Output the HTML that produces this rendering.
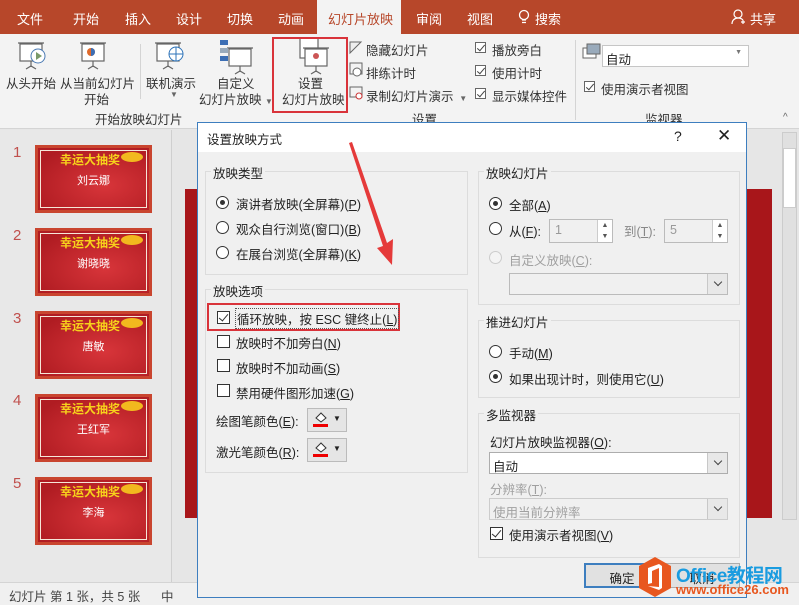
<!DOCTYPE html>
<html><head><meta charset="utf-8"><style>
*{margin:0;padding:0;box-sizing:border-box}
body{width:799px;height:605px;overflow:hidden;position:relative;background:#e6e6e6;font-family:"Liberation Sans","Noto Sans CJK SC",sans-serif;font-size:12px;color:#222}
.a{position:absolute;white-space:nowrap}
.tab{position:absolute;top:9px;color:#fff;font-size:13px}
.rb{font-size:12.5px;color:#333}
.thumb{position:absolute;left:35px;width:117px;height:68px;border:3px solid #c9452f;background:radial-gradient(ellipse at 60% 60%,#d8353a,#b01c22 80%)}
.thumb:after{content:"";position:absolute;left:2px;top:2px;right:2px;bottom:2px;border:1px solid #f6e6d8}
.thumb .t1{position:absolute;left:22px;top:3px;color:#f7d21b;font-weight:bold;font-size:12px}
.thumb .t2{position:absolute;left:0;right:0;top:24px;text-align:center;color:#fff;font-size:11px}
.gold{position:absolute;right:6px;top:4px;width:22px;height:10px;background:#f2b81e;border-radius:50%}
.num{position:absolute;left:13px;color:#c0504d;font-size:15px}
.frame{position:absolute;border:1px solid #dcdcdc}
.lbl{position:absolute;background:#f0f0f0;padding:0 2px;font-size:12.5px}
.rad{position:absolute;width:13px;height:13px;border:1px solid #333;border-radius:50%;background:#fff}
.rad.on:after{content:"";position:absolute;left:3px;top:3px;width:5px;height:5px;border-radius:50%;background:#333}
.chk{position:absolute;width:13px;height:13px;border:1px solid #333;background:#fff}
.chk.on:after{content:"";position:absolute;left:3px;top:0px;width:4px;height:8px;border:solid #333;border-width:0 1.5px 1.5px 0;transform:rotate(40deg)}
.t{position:absolute;font-size:12.5px;white-space:nowrap}
.dis{color:#a0a0a0}
.combo{position:absolute;border:1px solid #adadad;background:#fff}
.combo .btn{position:absolute;right:0;top:0;bottom:0;width:20px;border-left:1px solid #c8c8c8;background:#e8e8e8}
.combo .btn:after{content:"";position:absolute;left:7px;top:5px;width:5px;height:5px;border:solid #444;border-width:0 1px 1px 0;transform:rotate(45deg)}
.rck{position:absolute;width:11px;height:11px;border:1px solid #666;background:#fff}
.rck:after{content:"";position:absolute;left:3px;top:0;width:3px;height:7px;border:solid #444;border-width:0 1px 1px 0;transform:rotate(40deg)}
</style></head><body>
<!-- tab bar -->
<div class="a" style="left:0;top:0;width:799px;height:34px;background:#b7472a"></div>
<div class="tab" style="left:17px">文件</div>
<div class="tab" style="left:73px">开始</div>
<div class="tab" style="left:125px">插入</div>
<div class="tab" style="left:176px">设计</div>
<div class="tab" style="left:227px">切换</div>
<div class="tab" style="left:278px">动画</div>
<div class="a" style="left:317px;top:0;width:84px;height:35px;background:#f3f3f3"></div>
<div class="tab" style="left:328px;color:#b7472a">幻灯片放映</div>
<div class="tab" style="left:416px">审阅</div>
<div class="tab" style="left:467px">视图</div>
<svg class="a" style="left:518px;top:9px" width="12" height="17"><circle cx="6" cy="6" r="4.5" fill="none" stroke="#fff" stroke-width="1.3"/><path d="M4 11h4M4 13.5h4" stroke="#fff" stroke-width="1.3"/></svg>
<div class="tab" style="left:535px">搜索</div>
<svg class="a" style="left:731px;top:9px" width="16" height="16"><circle cx="7" cy="5" r="4" fill="none" stroke="#fff" stroke-width="1.2"/><path d="M1 15c0-4 3-6 6-6s4 1 5 2M12 11v4M10 13h4" fill="none" stroke="#fff" stroke-width="1.2"/></svg>
<div class="tab" style="left:750px">共享</div>
<!-- ribbon -->
<div class="a" style="left:0;top:34px;width:799px;height:95px;background:#f3f3f3;border-bottom:1px solid #d4d4d4"></div>
<svg class="a" style="left:0;top:36px" width="799" height="60">
<g fill="none" stroke="#666" stroke-width="1.2">
<rect x="20" y="8" width="22" height="17" fill="#fff"/><path d="M18 7h26M31 25v6M26 33l5-3 5 3"/>
<rect x="82" y="8" width="22" height="17" fill="#fff"/><path d="M80 7h26M93 25v6M88 33l5-3 5 3"/>
<rect x="157" y="8" width="22" height="17" fill="#fff"/><path d="M155 7h26M168 25v6M163 33l5-3 5 3"/>
<rect x="229" y="13" width="22" height="17" fill="#fff"/><path d="M227 12h26M240 30v6M235 38l5-3 5 3"/>
<rect x="300" y="2" width="18" height="20" fill="#fff"/>
<rect x="305" y="13" width="22" height="17" fill="#fff"/><path d="M303 12h26M316 30v6M311 38l5-3 5 3"/>
</g>
<circle cx="38" cy="20" r="7" fill="#fff" stroke="#4a7ab3"/><path d="M36 16v8l6-4z" fill="#7a9a6a"/>
<circle cx="91" cy="16" r="4" fill="#e06a2b"/><path d="M91 12a4 4 0 0 1 0 8z" fill="#3c6eb4"/>
<circle cx="176" cy="18" r="7" fill="#fff" stroke="#2e73b8"/><path d="M169 18h14M176 11v14" stroke="#2e73b8"/>
<rect x="220" y="4" width="8" height="5" fill="#3c6eb4"/><rect x="220" y="12" width="8" height="5" fill="#9ab"/><rect x="220" y="20" width="8" height="5" fill="#3c6eb4"/>
<circle cx="316" cy="20" r="3" fill="#c55"/>
<rect x="583" y="12" width="13" height="10" fill="#fff" stroke="#666"/><rect x="587" y="8" width="13" height="10" fill="#9ab" stroke="#666"/>
</svg>
<div class="a rb" style="left:6px;top:73px">从头开始</div>
<div class="a rb" style="left:60px;top:73px">从当前幻灯片</div>
<div class="a rb" style="left:84px;top:89px">开始</div>
<div class="a" style="left:140px;top:44px;width:1px;height:55px;background:#d4d4d4"></div>
<div class="a rb" style="left:146px;top:73px">联机演示</div>
<div class="a" style="left:170px;top:90px;font-size:8px;color:#666">▼</div>
<div class="a rb" style="left:217px;top:73px">自定义</div>
<div class="a rb" style="left:199px;top:89px">幻灯片放映 <span style="font-size:8px;color:#666">▼</span></div>
<div class="a" style="left:272px;top:37px;width:76px;height:76px;border:2.5px solid #d9333a"></div>
<div class="a rb" style="left:298px;top:73px">设置</div>
<div class="a rb" style="left:282px;top:89px">幻灯片放映</div>
<div class="a rb" style="left:95px;top:109px">开始放映幻灯片</div>
<svg class="a" style="left:348px;top:40px" width="16" height="60" fill="none" stroke="#666"><path d="M2 13L13 2H2z" fill="#eee"/><rect x="2" y="23" width="12" height="11"/><circle cx="9" cy="32" r="4" fill="#fff"/><rect x="2" y="47" width="12" height="10"/><circle cx="11" cy="56" r="3" fill="#fff" stroke="#c33"/></svg>
<div class="a rb" style="left:366px;top:40px">隐藏幻灯片</div>
<div class="a rb" style="left:366px;top:63px">排练计时</div>
<div class="a rb" style="left:366px;top:86px">录制幻灯片演示 <span style="font-size:8px;color:#666">&nbsp;▼</span></div>
<div class="rck" style="left:475px;top:42px"></div><div class="a rb" style="left:492px;top:40px">播放旁白</div>
<div class="rck" style="left:475px;top:65px"></div><div class="a rb" style="left:492px;top:63px">使用计时</div>
<div class="rck" style="left:475px;top:88px"></div><div class="a rb" style="left:492px;top:86px">显示媒体控件</div>
<div class="a rb" style="left:412px;top:109px">设置</div>
<div class="a" style="left:575px;top:40px;width:1px;height:80px;background:#d4d4d4"></div>
<div class="a" style="left:602px;top:45px;width:147px;height:22px;border:1px solid #c6c6c6;background:#fff;font-size:12.5px;padding:3px 3px">自动<span style="position:absolute;right:6px;top:3px;font-size:7px;color:#777">▼</span></div>
<div class="rck" style="left:584px;top:81px"></div><div class="a rb" style="left:601px;top:79px">使用演示者视图</div>
<div class="a rb" style="left:645px;top:109px">监视器</div>
<div class="a" style="left:783px;top:112px;font-size:10px;color:#666">^</div>
<!-- left panel -->
<div class="a" style="left:0;top:130px;width:172px;height:452px;background:#e8e8e8;border-right:1px solid #cfcfcf"></div>
<div class="num" style="top:144px">1</div><div class="num" style="top:227px">2</div><div class="num" style="top:310px">3</div><div class="num" style="top:392px">4</div><div class="num" style="top:475px">5</div>
<div class="thumb" style="top:145px"><div class="t1">幸运大抽奖</div><div class="gold"></div><div class="t2">刘云娜</div></div>
<div class="thumb" style="top:228px"><div class="t1">幸运大抽奖</div><div class="gold"></div><div class="t2">谢晓晓</div></div>
<div class="thumb" style="top:311px"><div class="t1">幸运大抽奖</div><div class="gold"></div><div class="t2">唐敏</div></div>
<div class="thumb" style="top:394px"><div class="t1">幸运大抽奖</div><div class="gold"></div><div class="t2">王红军</div></div>
<div class="thumb" style="top:477px"><div class="t1">幸运大抽奖</div><div class="gold"></div><div class="t2">李海</div></div>
<!-- main slide -->
<div class="a" style="left:185px;top:189px;width:587px;height:329px;background:#a8161a"></div>
<div class="a" style="left:782px;top:132px;width:15px;height:388px;background:#e0e0e0;border:1px solid #ccc"></div>
<div class="a" style="left:783px;top:148px;width:13px;height:60px;background:#fff;border:1px solid #ccc"></div>
<div class="a" style="left:0;top:582px;width:799px;height:23px;background:#f0f0f0;border-top:1px solid #d4d4d4"></div>
<div class="a" style="left:9px;top:586px;font-size:12.5px;color:#444">幻灯片 第 1 张，共 5 张</div>
<div class="a" style="left:161px;top:586px;font-size:12.5px;color:#444">中</div>
<!-- dialog -->
<div class="a" style="left:197px;top:122px;width:550px;height:476px;background:#f0f0f0;border:1px solid #3d7ebf"></div>
<div class="a" style="left:198px;top:123px;width:548px;height:29px;background:#fff"></div>
<div class="t" style="left:207px;top:129px">设置放映方式</div>
<div class="t" style="left:674px;top:128px;font-size:14px">?</div>
<div class="t" style="left:717px;top:126px;font-size:17px;font-weight:300">✕</div>
<div class="frame" style="left:205px;top:171px;width:263px;height:104px"></div>
<div class="lbl" style="left:211px;top:163px">放映类型</div>
<div class="rad on" style="left:216px;top:196px"></div><div class="t" style="left:236px;top:194px">演讲者放映(全屏幕)(<u>P</u>)</div>
<div class="rad" style="left:216px;top:221px"></div><div class="t" style="left:236px;top:219px">观众自行浏览(窗口)(<u>B</u>)</div>
<div class="rad" style="left:216px;top:246px"></div><div class="t" style="left:236px;top:244px">在展台浏览(全屏幕)(<u>K</u>)</div>
<div class="frame" style="left:205px;top:289px;width:263px;height:184px"></div>
<div class="lbl" style="left:211px;top:281px">放映选项</div>
<div class="a" style="left:207px;top:303px;width:193px;height:28px;border:2.5px solid #d9333a"></div>
<div class="chk on" style="left:217px;top:311px"></div><div class="t" style="left:235px;top:308px;border:1px dotted #555;padding:0 1px">循环放映，按 ESC 键终止(<u>L</u>)</div>
<div class="chk" style="left:217px;top:335px"></div><div class="t" style="left:236px;top:333px">放映时不加旁白(<u>N</u>)</div>
<div class="chk" style="left:217px;top:359px"></div><div class="t" style="left:236px;top:358px">放映时不加动画(<u>S</u>)</div>
<div class="chk" style="left:217px;top:384px"></div><div class="t" style="left:236px;top:383px">禁用硬件图形加速(<u>G</u>)</div>
<div class="t" style="left:216px;top:411px">绘图笔颜色(<u>E</u>):</div>
<div class="t" style="left:216px;top:442px">激光笔颜色(<u>R</u>):</div>
<div class="a" style="left:307px;top:408px;width:40px;height:24px;border:1px solid #bbb;background:#e5e5e5"><div class="a" style="left:5px;top:15px;width:15px;height:3px;background:#e00"></div><svg class="a" style="left:6px;top:2px" width="14" height="12"><path d="M2 7l5-5 5 5-5 4z" fill="#fff" stroke="#333"/></svg><div class="a" style="left:25px;top:5px;font-size:8px">▼</div></div>
<div class="a" style="left:307px;top:438px;width:40px;height:24px;border:1px solid #bbb;background:#e5e5e5"><div class="a" style="left:5px;top:15px;width:15px;height:3px;background:#e00"></div><svg class="a" style="left:6px;top:2px" width="14" height="12"><path d="M2 7l5-5 5 5-5 4z" fill="#fff" stroke="#333"/></svg><div class="a" style="left:25px;top:5px;font-size:8px">▼</div></div>
<!-- right column -->
<div class="frame" style="left:478px;top:171px;width:262px;height:134px"></div>
<div class="lbl" style="left:484px;top:163px">放映幻灯片</div>
<div class="rad on" style="left:489px;top:197px"></div><div class="t" style="left:509px;top:195px">全部(<u>A</u>)</div>
<div class="rad" style="left:489px;top:222px"></div><div class="t" style="left:509px;top:221px">从(<u>F</u>):</div>
<div class="a" style="left:549px;top:219px;width:64px;height:24px;border:1px solid #bbb;background:#f0f0f0;color:#999;padding:3px 5px;font-size:12.5px">1<div class="a" style="right:0;top:0;width:15px;height:22px;border-left:1px solid #ccc;background:#fff;font-size:7px;color:#555;line-height:11px;text-align:center">▲<br>▼</div></div>
<div class="t dis" style="left:624px;top:221px;color:#888">到(<u>T</u>):</div>
<div class="a" style="left:664px;top:219px;width:64px;height:24px;border:1px solid #bbb;background:#f0f0f0;color:#999;padding:3px 5px;font-size:12.5px">5<div class="a" style="right:0;top:0;width:15px;height:22px;border-left:1px solid #ccc;background:#fff;font-size:7px;color:#555;line-height:11px;text-align:center">▲<br>▼</div></div>
<div class="rad" style="left:489px;top:251px;border-color:#ccc;background:#f4f4f4"></div><div class="t dis" style="left:509px;top:250px">自定义放映(<u>C</u>):</div>
<div class="combo" style="left:509px;top:273px;width:219px;height:22px;background:#f0f0f0;border-color:#bbb"><div class="btn"></div></div>
<div class="frame" style="left:478px;top:320px;width:262px;height:78px"></div>
<div class="lbl" style="left:484px;top:312px">推进幻灯片</div>
<div class="rad" style="left:489px;top:345px"></div><div class="t" style="left:509px;top:343px">手动(<u>M</u>)</div>
<div class="rad on" style="left:489px;top:370px"></div><div class="t" style="left:509px;top:369px">如果出现计时，则使用它(<u>U</u>)</div>
<div class="frame" style="left:478px;top:413px;width:262px;height:145px"></div>
<div class="lbl" style="left:484px;top:405px">多监视器</div>
<div class="t" style="left:490px;top:432px">幻灯片放映监视器(<u>O</u>):</div>
<div class="combo" style="left:489px;top:452px;width:239px;height:22px"><div class="t" style="left:3px;top:3px">自动</div><div class="btn"></div></div>
<div class="t dis" style="left:490px;top:479px">分辨率(<u>T</u>):</div>
<div class="combo" style="left:489px;top:498px;width:239px;height:22px;background:#f0f0f0;border-color:#ccc"><div class="t dis" style="left:3px;top:3px">使用当前分辨率</div><div class="btn"></div></div>
<div class="chk on" style="left:490px;top:527px"></div><div class="t" style="left:509px;top:525px">使用演示者视图(<u>V</u>)</div>
<div class="a" style="left:584px;top:563px;width:76px;height:25px;border:2px solid #3d7ebf;background:#e1e1e1;text-align:center;padding-top:3px;font-size:12.5px">确定</div>
<div class="a" style="left:664px;top:563px;width:76px;height:25px;border:1px solid #adadad;background:#e1e1e1;text-align:center;padding-top:4px;font-size:12.5px">取消</div>
<!-- arrow -->
<svg class="a" style="left:340px;top:135px" width="70" height="140"><polygon points="9,8 12,7 47,108 53,104 52,130 37,113 43,111" fill="#e53a3a"/></svg>
<!-- watermark -->
<svg class="a" style="left:638px;top:556px" width="34" height="42"><polygon points="17,1 33,10 33,32 17,41 1,32 1,10" fill="#e8571f"/><path d="M10 12l11-4 3 2v22l-3 2-11-4 11 1V12l-7 3v12l-4 1z" fill="#fff"/></svg>
<div class="a" style="left:676px;top:561px;font-size:19px;font-weight:bold;color:#1a9ce0;letter-spacing:-0.5px">Office教程网</div>
<div class="a" style="left:676px;top:582px;font-size:13px;font-weight:bold;color:#e8571f">www.office26.com</div>
</body></html>
